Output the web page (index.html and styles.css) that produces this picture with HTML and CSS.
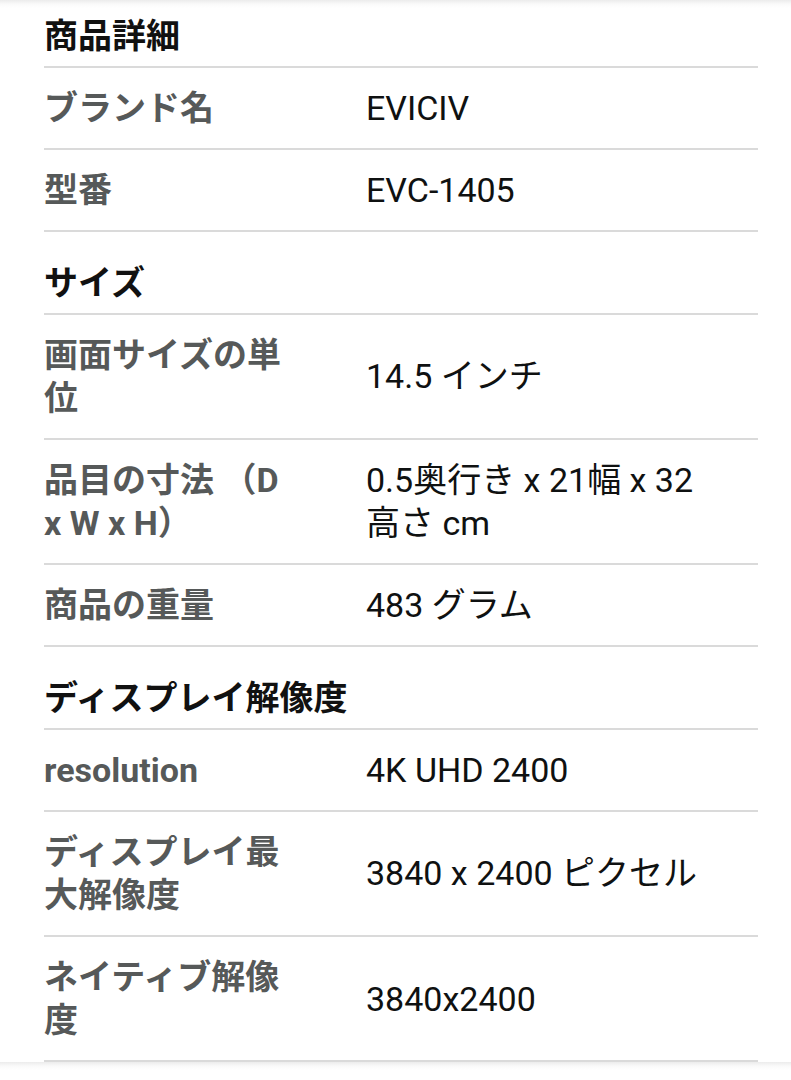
FILE: index.html
```html
<!DOCTYPE html>
<html lang="ja">
<head>
<meta charset="utf-8">
<title>商品詳細</title>
<link rel="stylesheet" href="styles.css">
</head>
<body>
<div class="specs">
  <div class="heading first">商品詳細</div>
  <div class="row"><div class="label">ブランド名</div><div class="value">EVICIV</div></div>
  <div class="row"><div class="label">型番</div><div class="value">EVC-1405</div></div>

  <div class="heading">サイズ</div>
  <div class="row"><div class="label">画面サイズの単位</div><div class="value">14.5 インチ</div></div>
  <div class="row"><div class="label">品目の寸法 （D x W x H）</div><div class="value">0.5奥行き x 21幅 x 32 高さ cm</div></div>
  <div class="row"><div class="label">商品の重量</div><div class="value">483 グラム</div></div>

  <div class="heading">ディスプレイ解像度</div>
  <div class="row"><div class="label">resolution</div><div class="value">4K UHD 2400</div></div>
  <div class="row"><div class="label">ディスプレイ最大解像度</div><div class="value">3840 x 2400 ピクセル</div></div>
  <div class="row"><div class="label">ネイティブ解像度</div><div class="value">3840x2400</div></div>
</div>
</body>
</html>
```

FILE: styles.css
```css
html, body {
  margin: 0;
  padding: 0;
}

body {
  background: linear-gradient(to bottom, #ececec 0, #fafafa 4px, #ffffff 8px);
  font-family: Roboto, "Noto Sans CJK JP", sans-serif;
  font-size: 34px;
  line-height: 43.5px;
  color: #111111;
}

.specs {
  padding: 0 33px 0 44px;
}

.heading {
  font-weight: 700;
  color: #111111;
  padding: 30px 0 7.5px;
  border-bottom: 2px solid #dadada;
}

.heading.first {
  padding-top: 15px;
}

.row {
  display: grid;
  grid-template-columns: 322px 1fr;
  align-items: center;
  padding: 19px 0 17.25px;
  border-bottom: 2px solid #dadada;
}

.label {
  font-weight: 700;
  color: #565959;
  padding-right: 80px;
}

.value {
  color: #0f1111;
  font-weight: 400;
  padding-right: 30px;
}
```
